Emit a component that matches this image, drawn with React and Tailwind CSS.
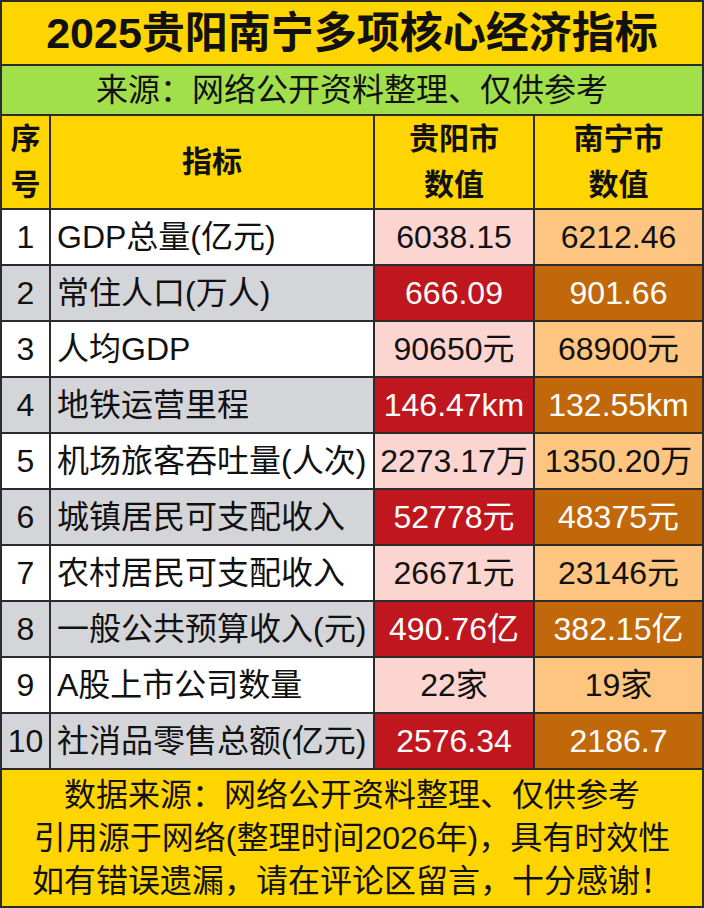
import React from "react";

const rows = [
  ["1", "GDP总量(亿元)", "6038.15", "6212.46"],
  ["2", "常住人口(万人)", "666.09", "901.66"],
  ["3", "人均GDP", "90650元", "68900元"],
  ["4", "地铁运营里程", "146.47km", "132.55km"],
  ["5", "机场旅客吞吐量(人次)", "2273.17万", "1350.20万"],
  ["6", "城镇居民可支配收入", "52778元", "48375元"],
  ["7", "农村居民可支配收入", "26671元", "23146元"],
  ["8", "一般公共预算收入(元)", "490.76亿", "382.15亿"],
  ["9", "A股上市公司数量", "22家", "19家"],
  ["10", "社消品零售总额(亿元)", "2576.34", "2186.7"],
];

function DataRow({ seq, name, gy, nn }) {
  const dark = Number(seq) % 2 === 0;
  return (
    <div className="flex h-[56px] border-b-2 border-[#2b2b2b] text-[32px] leading-none">
      <div
        className={
          "w-[49px] shrink-0 border-r-2 border-[#2b2b2b] flex items-center justify-center text-[#111] " +
          (dark ? "bg-[#d4d5d9]" : "bg-white")
        }
      >
        {seq}
      </div>
      <div
        className={
          "w-[324px] shrink-0 border-r-2 border-[#2b2b2b] flex items-center pl-[6px] whitespace-nowrap text-[#111] " +
          (dark ? "bg-[#d4d5d9]" : "bg-white")
        }
      >
        {name}
      </div>
      <div
        className={
          "w-[160px] shrink-0 border-r-2 border-[#2b2b2b] flex items-center justify-center whitespace-nowrap " +
          (dark ? "bg-[#c0161e] text-white" : "bg-[#fcd5d0] text-[#111]")
        }
      >
        {gy}
      </div>
      <div
        className={
          "flex-1 flex items-center justify-center whitespace-nowrap " +
          (dark ? "bg-[#c1690a] text-white" : "bg-[#fdc57f] text-[#111]")
        }
      >
        {nn}
      </div>
    </div>
  );
}

export default function App() {
  return (
    <div
      className="w-[704px] h-[908px] border-2 border-[#2b2b2b] flex flex-col overflow-hidden"
      style={{ fontFamily: '"Liberation Sans", "Noto Sans CJK SC", sans-serif' }}
    >
      {/* 标题 */}
      <div className="h-[64px] shrink-0 bg-[#ffd500] border-b-2 border-[#2b2b2b] flex items-center justify-center text-[43px] leading-none font-bold text-[#111] whitespace-nowrap">
        2025贵阳南宁多项核心经济指标
      </div>

      {/* 来源 */}
      <div className="h-[50px] shrink-0 bg-[#a2e04b] border-b-2 border-[#2b2b2b] flex items-center justify-center text-[32px] leading-none text-[#111] whitespace-nowrap">
        来源：网络公开资料整理、仅供参考
      </div>

      {/* 表头 */}
      <div className="h-[94px] shrink-0 flex bg-[#ffd500] border-b-2 border-[#2b2b2b] text-[30px] font-bold text-[#111] leading-[46px]">
        <div className="w-[49px] shrink-0 border-r-2 border-[#2b2b2b] flex flex-col items-center justify-center">
          <span>序</span>
          <span>号</span>
        </div>
        <div className="w-[324px] shrink-0 border-r-2 border-[#2b2b2b] flex items-center justify-center">
          指标
        </div>
        <div className="w-[160px] shrink-0 border-r-2 border-[#2b2b2b] flex flex-col items-center justify-center">
          <span>贵阳市</span>
          <span>数值</span>
        </div>
        <div className="flex-1 flex flex-col items-center justify-center">
          <span>南宁市</span>
          <span>数值</span>
        </div>
      </div>

      {rows.map((r) => (
        <DataRow key={r[0]} seq={r[0]} name={r[1]} gy={r[2]} nn={r[3]} />
      ))}

      {/* 底部说明 */}
      <div className="flex-1 bg-[#ffd500] flex flex-col items-center justify-center text-[32px] leading-[43px] text-[#111] whitespace-nowrap">
        <span>数据来源：网络公开资料整理、仅供参考</span>
        <span>引用源于网络(整理时间2026年)，具有时效性</span>
        <span>如有错误遗漏，请在评论区留言，十分感谢！</span>
      </div>
    </div>
  );
}
